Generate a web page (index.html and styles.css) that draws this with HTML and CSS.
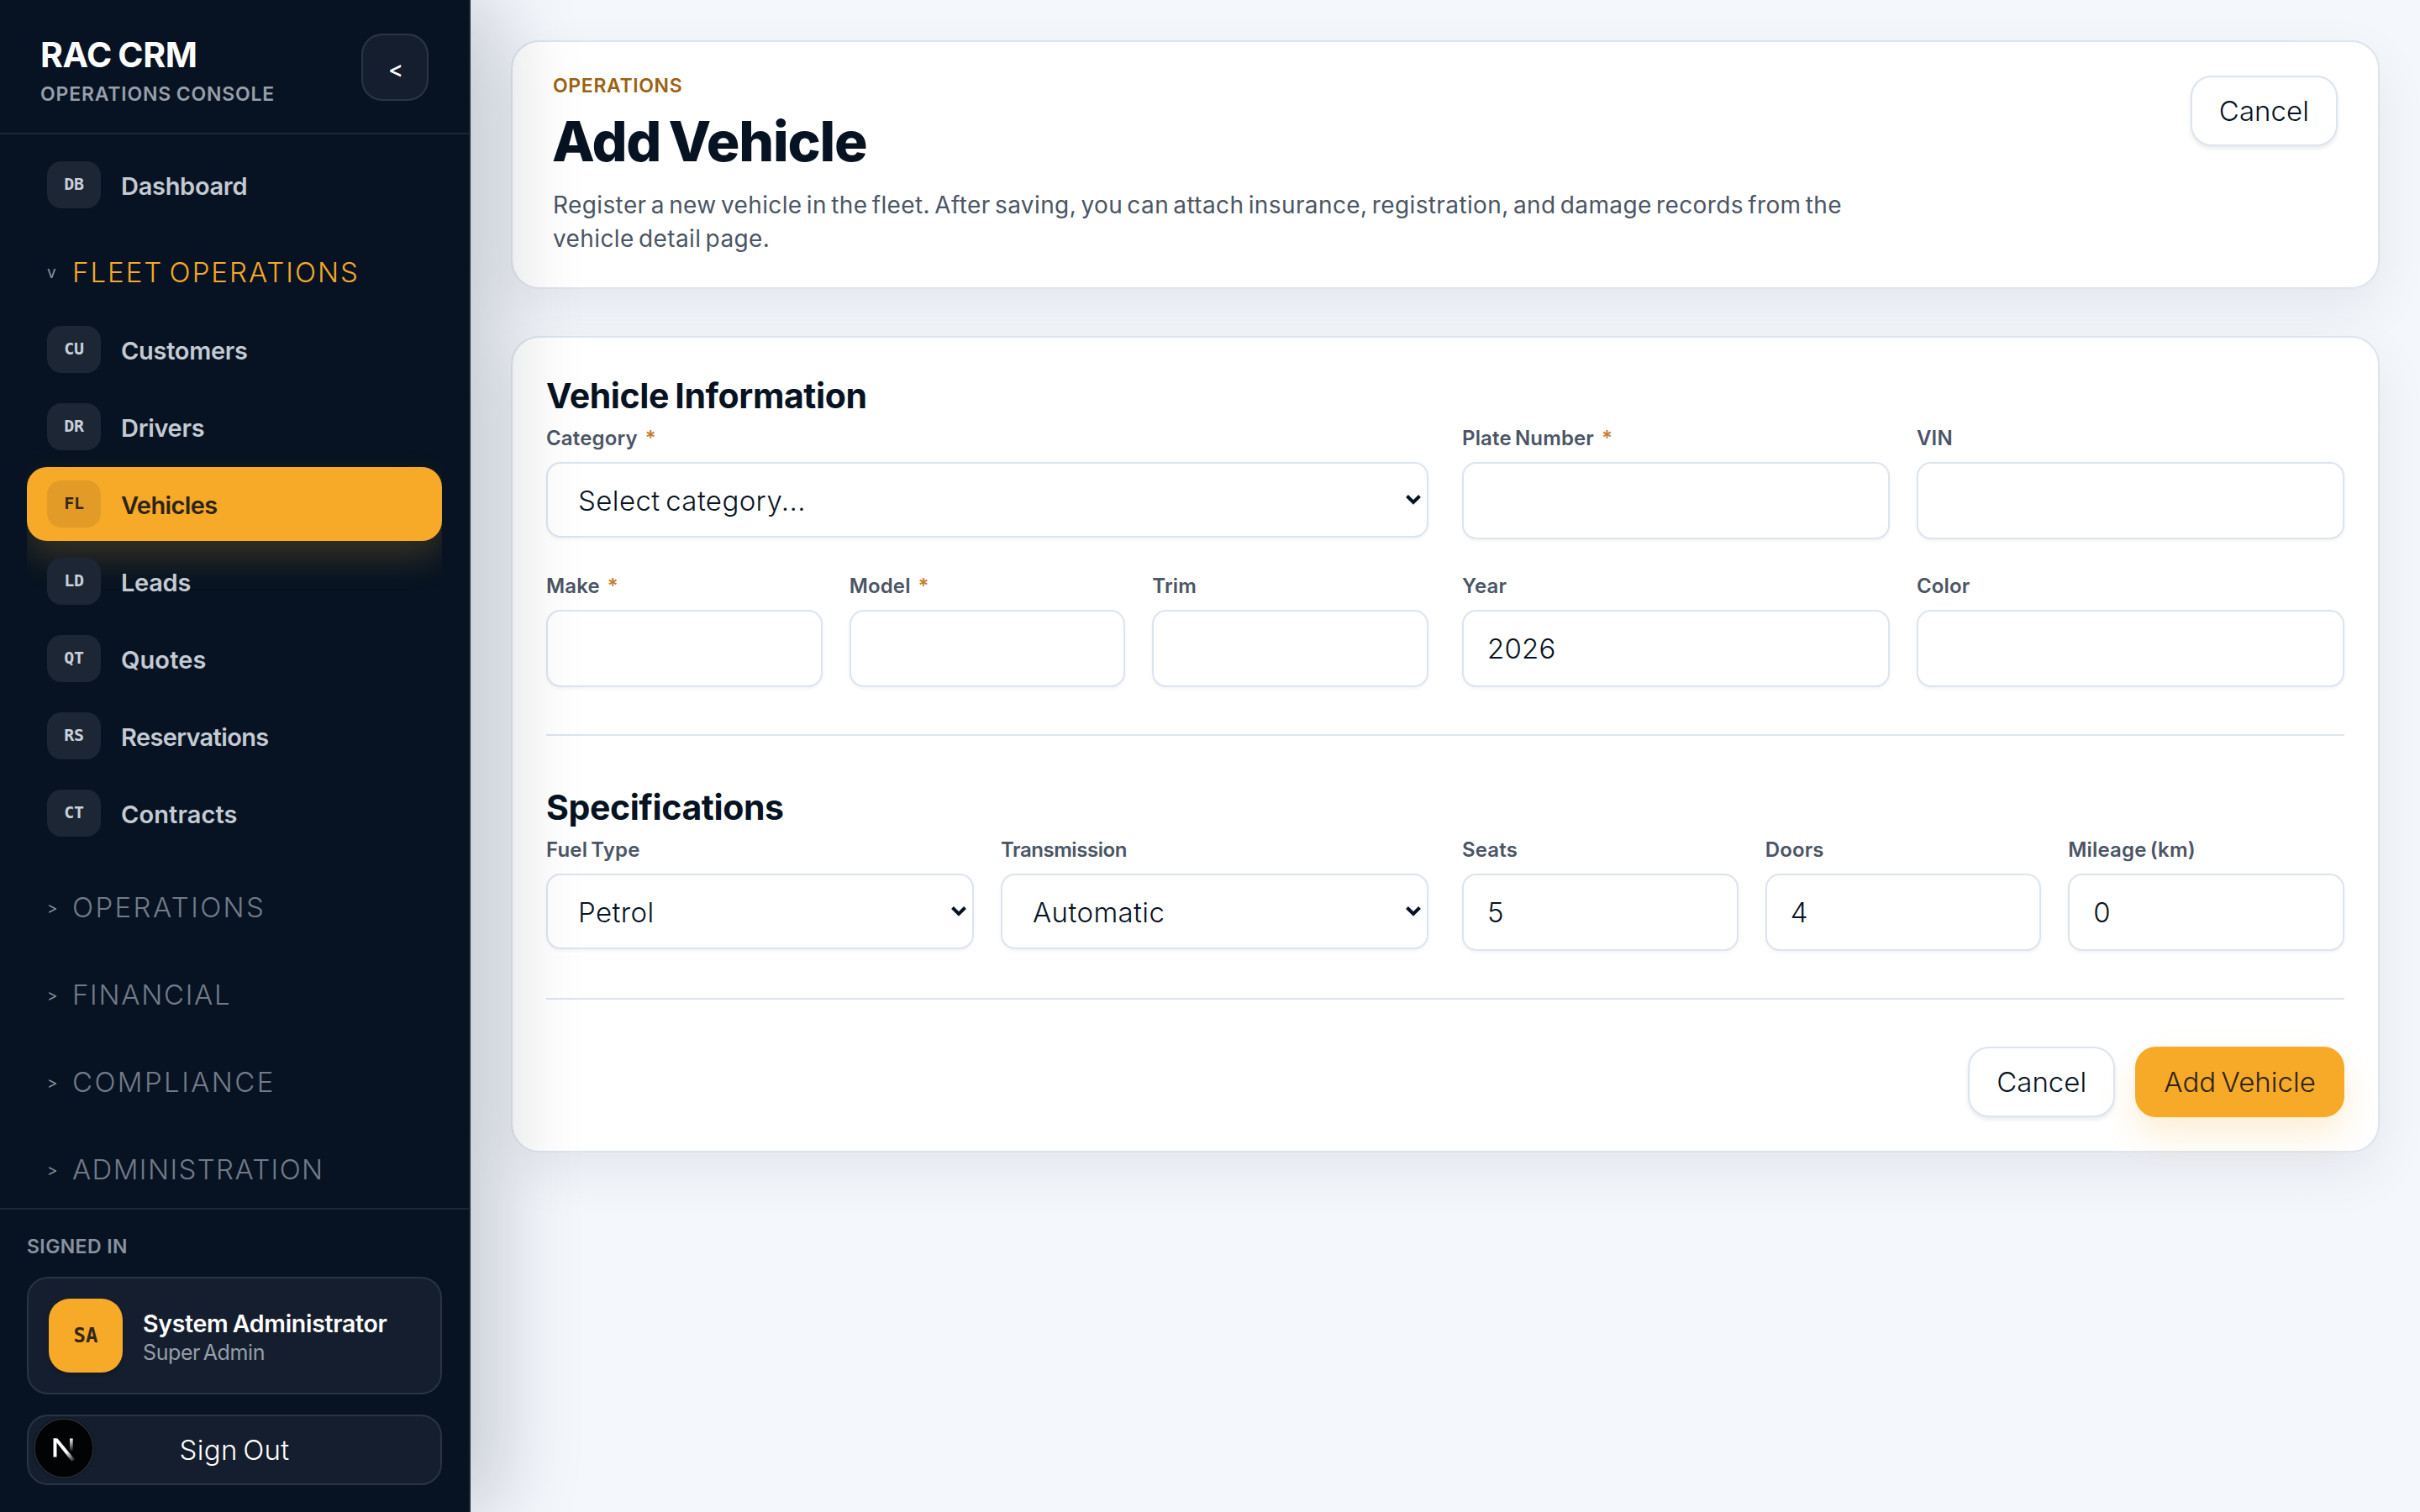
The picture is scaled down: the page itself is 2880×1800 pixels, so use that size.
FILE: index.html
```html
<!DOCTYPE html>
<html lang="en">
<head>
<meta charset="utf-8">
<title>RAC CRM - Add Vehicle</title>
<link rel="stylesheet" href="styles.css">
</head>
<body>
<div class="app">
  <aside class="sidebar">
    <header class="sidebar-header">
      <div class="brand">
        <div class="brand-name">RAC CRM</div>
        <div class="brand-sub">OPERATIONS CONSOLE</div>
      </div>
      <button class="collapse" type="button">&lt;</button>
    </header>
    <nav class="nav">
      <a class="nav-item"><span class="nav-icon">DB</span><span class="nav-label">Dashboard</span></a>
      <div class="nav-group nav-group-open"><span class="caret">v</span><span class="group-title">FLEET OPERATIONS</span></div>
      <div class="nav-list">
        <a class="nav-item"><span class="nav-icon">CU</span><span class="nav-label">Customers</span></a>
        <a class="nav-item"><span class="nav-icon">DR</span><span class="nav-label">Drivers</span></a>
        <a class="nav-item nav-item-active"><span class="nav-icon">FL</span><span class="nav-label">Vehicles</span></a>
        <a class="nav-item"><span class="nav-icon">LD</span><span class="nav-label">Leads</span></a>
        <a class="nav-item"><span class="nav-icon">QT</span><span class="nav-label nav-label-wide">Quotes</span></a>
        <a class="nav-item"><span class="nav-icon">RS</span><span class="nav-label nav-label-tight">Reservations</span></a>
        <a class="nav-item"><span class="nav-icon">CT</span><span class="nav-label nav-label-wide">Contracts</span></a>
      </div>
      <div class="nav-groups">
        <div class="nav-group"><span class="caret">&gt;</span><span class="group-title group-title-wide">OPERATIONS</span></div>
        <div class="nav-group"><span class="caret">&gt;</span><span class="group-title">FINANCIAL</span></div>
        <div class="nav-group"><span class="caret">&gt;</span><span class="group-title group-title-wide">COMPLIANCE</span></div>
        <div class="nav-group"><span class="caret">&gt;</span><span class="group-title group-title-tight">ADMINISTRATION</span></div>
      </div>
    </nav>
    <footer class="sidebar-footer">
      <div class="signed-label">SIGNED IN</div>
      <div class="user-card">
        <div class="avatar">SA</div>
        <div class="user-text">
          <div class="user-name">System Administrator</div>
          <div class="user-role">Super Admin</div>
        </div>
      </div>
      <div class="signout-wrap">
        <button class="signout" type="button">Sign Out</button>
        <svg class="dev-badge" viewBox="0 0 76 76" aria-hidden="true">
          <defs>
            <linearGradient id="diag" gradientUnits="userSpaceOnUse" x1="35" y1="38" x2="49" y2="54">
              <stop offset="0.35" stop-color="#fff"/><stop offset="1" stop-color="#fff" stop-opacity="0.1"/>
            </linearGradient>
            <linearGradient id="stem" gradientUnits="userSpaceOnUse" x1="46" y1="26" x2="46" y2="41">
              <stop offset="0" stop-color="#fff"/><stop offset="1" stop-color="#fff" stop-opacity="0.1"/>
            </linearGradient>
          </defs>
          <circle cx="38" cy="38" r="37" fill="#0a1626"/>
          <circle cx="38" cy="38" r="35" fill="#020305" stroke="#2b2e33" stroke-width="1.5"/>
          <path d="M25.5 48.5V26.5H29.5V48.5Z" fill="#fff"/>
          <path d="M25.5 26.5H30.5L51 51.5L47.5 54Z" fill="url(#diag)"/>
          <path d="M45 26.5H48.7V41H45Z" fill="url(#stem)"/>
        </svg>
      </div>
    </footer>
  </aside>

  <main class="main">
    <section class="card page-head">
      <div class="page-head-text">
        <div class="eyebrow">OPERATIONS</div>
        <h1 class="page-title">Add Vehicle</h1>
        <p class="page-desc">Register a new vehicle in the fleet. After saving, you can attach insurance, registration, and damage records from the vehicle detail page.</p>
      </div>
      <button class="btn" type="button">Cancel</button>
    </section>

    <form class="card form-card">
      <h2 class="section-title">Vehicle Information</h2>
      <div class="rows">
        <div class="row">
          <div class="cols cols-1">
            <label class="field"><span class="field-label">Category<b class="req">*</b></span>
              <span class="select"><select><option>Select category...</option></select><svg class="chev" viewBox="0 0 20 16"><path d="M2.5 3.5L10 11L17.5 3.5"/></svg></span></label>
          </div>
          <div class="cols cols-2">
            <label class="field"><span class="field-label">Plate Number<b class="req">*</b></span><input class="input"></label>
            <label class="field"><span class="field-label">VIN</span><input class="input"></label>
          </div>
        </div>
        <div class="row">
          <div class="cols cols-3">
            <label class="field"><span class="field-label">Make<b class="req">*</b></span><input class="input"></label>
            <label class="field"><span class="field-label">Model<b class="req">*</b></span><input class="input"></label>
            <label class="field"><span class="field-label">Trim</span><input class="input"></label>
          </div>
          <div class="cols cols-2">
            <label class="field"><span class="field-label">Year</span><input class="input" value="2026"></label>
            <label class="field"><span class="field-label">Color</span><input class="input"></label>
          </div>
        </div>
      </div>
      <hr class="divider">
      <h2 class="section-title">Specifications</h2>
      <div class="rows">
        <div class="row">
          <div class="cols cols-2">
            <label class="field"><span class="field-label">Fuel Type</span>
              <span class="select"><select><option>Petrol</option></select><svg class="chev" viewBox="0 0 20 16"><path d="M2.5 3.5L10 11L17.5 3.5"/></svg></span></label>
            <label class="field"><span class="field-label field-label-tight">Transmission</span>
              <span class="select"><select><option>Automatic</option></select><svg class="chev" viewBox="0 0 20 16"><path d="M2.5 3.5L10 11L17.5 3.5"/></svg></span></label>
          </div>
          <div class="cols cols-3">
            <label class="field"><span class="field-label">Seats</span><input class="input" value="5"></label>
            <label class="field"><span class="field-label">Doors</span><input class="input" value="4"></label>
            <label class="field"><span class="field-label">Mileage (km)</span><input class="input" value="0"></label>
          </div>
        </div>
      </div>
      <hr class="divider">
      <div class="actions">
        <button class="btn" type="button">Cancel</button>
        <button class="btn btn-primary" type="button">Add Vehicle</button>
      </div>
    </form>
  </main>
</div>
</body>
</html>
```
FILE: styles.css
```css
* { box-sizing: border-box; }

body {
  margin: 0;
  background: #f4f7fc;
  color: #071322;
  font-family: Inter, "Liberation Sans", sans-serif;
  overflow: hidden;
}

button, input, select { font: inherit; color: inherit; margin: 0; }

.app { display: flex; width: 2880px; height: 1800px; }

/* Sidebar */
.sidebar {
  position: relative;
  z-index: 1;
  flex: none;
  display: flex;
  flex-direction: column;
  width: 560px;
  background: #071322;
  border-right: 2px solid #1b2635;
  box-shadow: 32px 0 96px rgba(6, 19, 34, .2);
  color: #fff;
}

.sidebar-header {
  display: flex;
  justify-content: space-between;
  height: 160px;
  padding: 40px 48px 0;
  border-bottom: 2px solid #1b2736;
}

.brand-name { font-size: 41px; line-height: 50px; font-weight: 700; letter-spacing: -.4px; word-spacing: -2px; }
.brand-sub { margin-top: 6px; font-size: 23px; line-height: 32px; font-weight: 600; letter-spacing: .82px; word-spacing: -1px; color: #989fab; }

.collapse {
  width: 80px;
  height: 80px;
  padding: 4px 0 0 2px;
  border: 2px solid #2a3646;
  border-radius: 25px;
  background: #151e2e;
  font-size: 27px;
  font-weight: 500;
}

.nav { flex: 1; min-height: 0; overflow: hidden; margin: 0 32px; padding-top: 16px; }

.nav-item {
  display: flex;
  align-items: center;
  gap: 24px;
  height: 88px;
  padding: 0 24px;
  border-radius: 24px;
}

.nav-icon {
  width: 64px;
  height: 56px;
  border-radius: 17px;
  background: #1c2634;
  color: #c9d0da;
  font: 600 20px/54px "DejaVu Sans Mono", monospace;
  letter-spacing: -.3px;
  text-align: center;
}

.nav-label { padding-top: 3px; font-size: 29px; line-height: 40px; font-weight: 600; letter-spacing: -.3px; color: #c4cad3; }
.nav-label-tight { letter-spacing: -.65px; }
.nav-label-wide { letter-spacing: .1px; }

.nav-item-active { background: #f7a928; box-shadow: 0 20px 40px rgba(247, 169, 40, .2); }
.nav-item-active .nav-icon { background: #e29b26; color: #332817; }
.nav-item-active .nav-label { color: #2b2418; letter-spacing: -.6px; }

.nav-list { display: grid; gap: 4px; position: relative; }
.nav-groups { display: grid; gap: 24px; margin-top: 28px; }

.nav-group { display: flex; align-items: center; height: 80px; padding-left: 24px; color: #737b89; }
.nav-group-open { margin: 20px 0 8px; }
.nav-group-open .group-title { color: #f7a928; letter-spacing: 2px; word-spacing: -4px; }
.nav-group-open .caret { padding-top: 0; }
.caret { width: 30px; padding-top: 2px; font-size: 19px; color: #8a92a0; }
.group-title { font-size: 33px; line-height: 40px; font-weight: 300; letter-spacing: 1.7px; }
.group-title-wide { letter-spacing: 2.4px; }
.group-title-tight { letter-spacing: 1.4px; }

.sidebar-footer { height: 362px; padding: 28px 32px 0; border-top: 2px solid #1b2736; }
.signed-label { font-size: 23px; line-height: 32px; font-weight: 600; letter-spacing: .4px; color: #8a92a0; }

.user-card {
  display: flex;
  align-items: center;
  gap: 24px;
  height: 140px;
  margin-top: 20px;
  padding: 0 24px;
  border: 2px solid #283445;
  border-radius: 25px;
  background: #151e2e;
}

.avatar {
  width: 88px;
  height: 88px;
  border-radius: 25px;
  background: #f7a928;
  box-shadow: 0 2px 4px rgba(0, 0, 0, .2);
  color: #332817;
  font: 600 24px/88px "DejaVu Sans Mono", monospace;
  text-align: center;
}

.user-text { padding-top: 3px; }
.user-name { font-size: 28.5px; line-height: 36px; font-weight: 600; letter-spacing: -.3px; word-spacing: -1.5px; white-space: nowrap; }
.user-role { font-size: 25px; line-height: 32px; letter-spacing: -.4px; word-spacing: -3px; color: #969eaa; }

.signout-wrap { position: relative; margin-top: 24px; }
.signout {
  display: block;
  width: 100%;
  height: 84px;
  border: 2px solid #283445;
  border-radius: 25px;
  background: #151e2e;
  font-size: 33px;
  font-weight: 300;
  letter-spacing: .3px;
  word-spacing: -3px;
}
.dev-badge { position: absolute; left: 6px; top: 2px; width: 76px; height: 76px; }

/* Main column */
.main { flex: 1; min-width: 0; padding: 48px; }

.card {
  background: #fff;
  border: 2px solid #dce4ee;
  border-radius: 34px;
  box-shadow: 0 24px 64px rgba(6, 19, 34, .07);
}

.page-head {
  display: flex;
  justify-content: space-between;
  align-items: flex-start;
  height: 296px;
  padding: 40px 48px 0;
}

.eyebrow { font-size: 23px; line-height: 24px; font-weight: 600; letter-spacing: .65px; color: #9b6111; }
.page-title { margin: 16px 0 18px -1px; font-size: 66px; line-height: 76px; font-weight: 800; letter-spacing: -1.2px; word-spacing: -4px; }
.page-desc { max-width: 1590px; margin: 0; font-size: 28px; line-height: 40px; letter-spacing: .39px; word-spacing: -3px; color: #4b5565; }

.btn {
  height: 84px;
  padding: 0 32px;
  border: 2px solid #dce4f0;
  border-radius: 25px;
  background: #fff;
  box-shadow: 0 3px 5px rgba(6, 19, 34, .09);
  font-size: 33px;
  font-weight: 300;
  letter-spacing: .05px;
}
.btn-primary {
  border-color: #f7a928;
  background: #f7a928;
  box-shadow: 0 20px 40px rgba(247, 169, 40, .2);
  color: #2b2418;
  word-spacing: -3px;
}

.form-card { margin-top: 56px; padding: 40px; }
.section-title { margin: 0 0 5px; font-size: 41px; line-height: 59px; font-weight: 700; letter-spacing: -.4px; word-spacing: -2px; }

.rows { display: grid; gap: 40px; }
.row { display: grid; grid-template-columns: 1fr 1fr; gap: 40px; }
.cols { display: grid; gap: 32px; align-items: start; }
.cols-2 { grid-template-columns: repeat(2, minmax(0, 1fr)); }
.cols-3 { grid-template-columns: repeat(3, minmax(0, 1fr)); }

.field { display: block; min-width: 0; }
.field-label { display: block; margin-bottom: 12px; font-size: 24px; line-height: 32px; font-weight: 600; letter-spacing: .15px; word-spacing: -2px; color: #4b5565; }
.field-label-tight { letter-spacing: -.45px; }
.req { margin-left: 9px; font-weight: 600; color: #c67f34; }

.input, .select select {
  display: block;
  width: 100%;
  height: 92px;
  padding: 0 28px;
  border: 2px solid #dce4f0;
  border-radius: 17px;
  background: #fff;
  box-shadow: 0 2px 4px rgba(6, 19, 34, .05);
  font-size: 33px;
  font-weight: 300;
  letter-spacing: .2px;
  outline: none;
}
.select { position: relative; display: block; }
.select select { height: 90px; padding: 2px 36px 0; appearance: none; letter-spacing: .4px; word-spacing: -3px; }
.chev { position: absolute; right: 8px; top: 37px; width: 20px; height: 16px; fill: none; stroke: #071322; stroke-width: 4; }

.divider { height: 2px; margin: 56px 0; border: 0; background: #dce4f0; }
.actions { display: flex; justify-content: flex-end; gap: 24px; }
```
